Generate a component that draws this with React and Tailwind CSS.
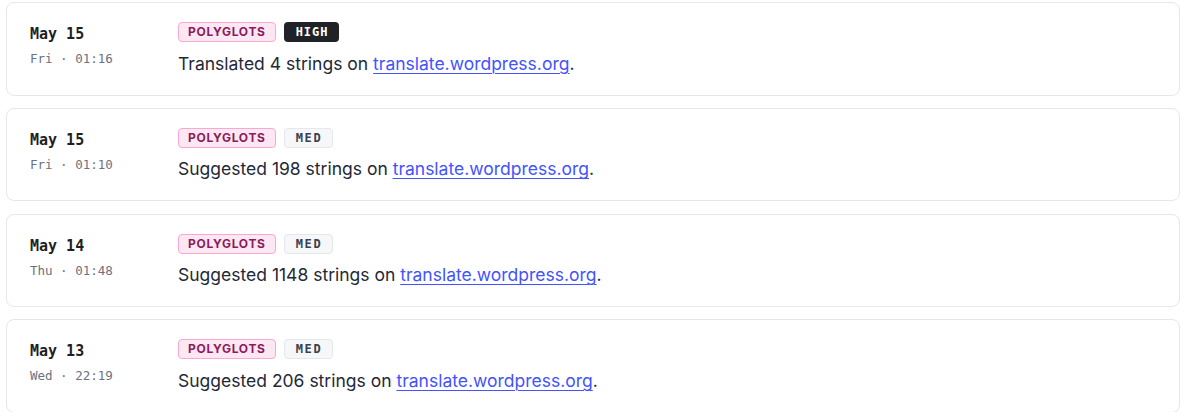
import React from 'react';

const entries = [
  { date: 'May 15', day: 'Fri', time: '01:16', level: 'HIGH', verb: 'Translated', count: 4 },
  { date: 'May 15', day: 'Fri', time: '01:10', level: 'MED', verb: 'Suggested', count: 198 },
  { date: 'May 14', day: 'Thu', time: '01:48', level: 'MED', verb: 'Suggested', count: 1148 },
  { date: 'May 13', day: 'Wed', time: '22:19', level: 'MED', verb: 'Suggested', count: 206 },
];

const mono = "font-['DejaVu_Sans_Mono',monospace]";

const LevelBadge = ({ level }) =>
  level === 'HIGH' ? (
    <span className={`${mono} inline-flex h-[20px] items-center rounded-[4px] bg-[#1f2328] pl-[12px] pr-[11px] text-[12px] font-bold tracking-[0.08em] text-white`}>
      HIGH
    </span>
  ) : (
    <span className={`${mono} inline-flex h-[20px] items-center rounded-[4px] border border-[#e5e7eb] bg-[#f6f7f8] pl-[11px] pr-[10px] text-[12px] font-bold tracking-[0.14em] text-[#374151]`}>
      MED
    </span>
  );

const Entry = ({ entry }) => (
  <div className="flex h-[93.5px] rounded-[8px] border border-[#e5e7eb] bg-white">
    <div className="w-[171px] shrink-0 pl-[23px] pt-[21px]">
      <div className={`${mono} text-[15px] font-bold leading-[20px] text-[#1f1f1f]`}>{entry.date}</div>
      <div className={`${mono} mt-[6px] text-[12.5px] leading-[18px] text-[#6b7280]`}>
        {entry.day} · {entry.time}
      </div>
    </div>
    <div className="pt-[19px]">
      <div className="flex gap-[8px]">
        <span className="inline-flex h-[20px] items-center rounded-[4px] border border-[#f9a8d4] bg-[#fde7f3] px-[9px] font-['Inter',sans-serif] text-[12px] font-bold tracking-[0.06em] text-[#8a1c5c]">
          POLYGLOTS
        </span>
        <LevelBadge level={entry.level} />
      </div>
      <p className="mt-[9.5px] font-['Inter',sans-serif] text-[17.5px] leading-[24px] text-[#1f2937]">
        {entry.verb} {entry.count} strings on{' '}
        <a href="#" className="text-[#4353ff] underline underline-offset-[3px] decoration-1">
          translate.wordpress.org
        </a>
        .
      </p>
    </div>
  </div>
);

export default function App() {
  return (
    <div className="flex flex-col gap-[12.3px] bg-white pl-[6px] pr-[1px] pt-[2px]">
      {entries.map((e, i) => (
        <Entry key={i} entry={e} />
      ))}
    </div>
  );
}
